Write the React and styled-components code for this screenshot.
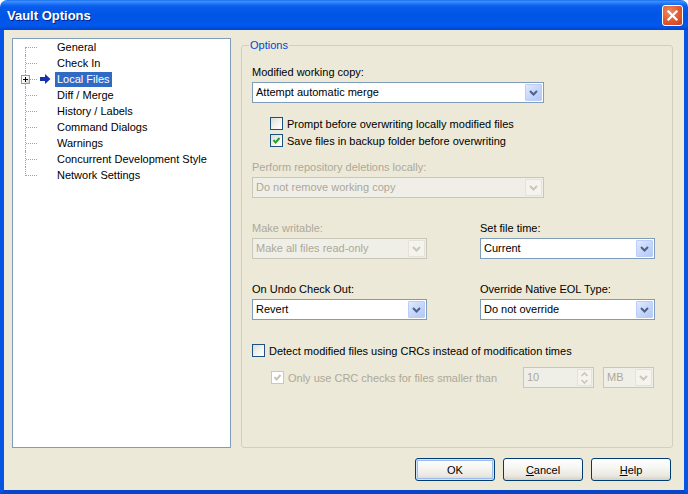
import React from 'react';
import styled, { createGlobalStyle, css } from 'styled-components';

const GlobalStyle = createGlobalStyle`
  body {
    margin: 0;
    background: #ffffff;
    font-family: 'Liberation Sans', Arial, sans-serif;
    font-size: 11px;
    color: #000;
  }
`;

const treeItems = [
  'General',
  'Check In',
  'Local Files',
  'Diff / Merge',
  'History / Labels',
  'Command Dialogs',
  'Warnings',
  'Concurrent Development Style',
  'Network Settings',
];

function Chevron({ disabled }) {
  return (
    <svg width="9" height="6" viewBox="0 0 9 6">
      <polyline points="1,1 4.5,4.5 8,1" fill="none" stroke={disabled ? '#C9C7BA' : '#4D6185'} strokeWidth="2" />
    </svg>
  );
}

function Combo({ value, disabled, width }) {
  return (
    <ComboBox $disabled={disabled} $width={width}>
      <ComboText>{value}</ComboText>
      <DropButton $disabled={disabled}>
        <Chevron disabled={disabled} />
      </DropButton>
    </ComboBox>
  );
}

function Check({ checked, disabled, children }) {
  return (
    <CheckLabel $disabled={disabled}>
      <CheckBox $disabled={disabled}>
        {checked && (
          <svg width="11" height="11" viewBox="0 0 11 11">
            <polyline points="2.5,5 4.5,7.5 8.5,3" fill="none" stroke={disabled ? '#C6C3B4' : '#21A121'} strokeWidth="2" />
          </svg>
        )}
      </CheckBox>
      {children}
    </CheckLabel>
  );
}

export default function App() {
  return (
    <>
      <GlobalStyle />
      <Window>
        <TitleBar>
          <Title>Vault Options</Title>
          <CloseButton>
            <svg width="13" height="13" viewBox="0 0 13 13">
              <path d="M2.5 2.5 L10.5 10.5 M10.5 2.5 L2.5 10.5" stroke="#fff" strokeWidth="2.2" strokeLinecap="square" />
            </svg>
          </CloseButton>
        </TitleBar>
        <Frame>
          <Main>
            <Tree>
              {treeItems.map((item, i) => (
                <TreeRow key={item}>
                  <Gutter $first={i === 0} $last={i === treeItems.length - 1}>
                    {item === 'Local Files' && (
                      <>
                        <PlusBox>
                          <svg width="7" height="7" viewBox="0 0 7 7">
                            <path d="M1 3.5 H6 M3.5 1 V6" stroke="#000" strokeWidth="1" />
                          </svg>
                        </PlusBox>
                        <Arrow>
                          <svg width="11" height="10" viewBox="0 0 11 10">
                            <polygon points="0,3 5,3 5,0 10.5,5 5,10 5,7 0,7" fill="#1A2FB0" />
                          </svg>
                        </Arrow>
                      </>
                    )}
                  </Gutter>
                  <TreeLabel $selected={item === 'Local Files'}>{item}</TreeLabel>
                </TreeRow>
              ))}
            </Tree>
            <Group>
              <Legend>Options</Legend>
              <Field $top={13}>
                <Label>Modified working copy:</Label>
                <Combo value="Attempt automatic merge" width={292} />
              </Field>
              <CheckList>
                <CheckRow $indent={18}>
                  <Check>Prompt before overwriting locally modified files</Check>
                </CheckRow>
                <CheckRow $indent={18}>
                  <Check checked>Save files in backup folder before overwriting</Check>
                </CheckRow>
              </CheckList>
              <Field $top={11}>
                <Label $disabled>Perform repository deletions locally:</Label>
                <Combo value="Do not remove working copy" width={292} disabled />
              </Field>
              <Columns $top={23}>
                <Field>
                  <Label $disabled>Make writable:</Label>
                  <Combo value="Make all files read-only" disabled />
                </Field>
                <Field>
                  <Label>Set file time:</Label>
                  <Combo value="Current" />
                </Field>
              </Columns>
              <Columns $top={23}>
                <Field>
                  <Label>On Undo Check Out:</Label>
                  <Combo value="Revert" />
                </Field>
                <Field>
                  <Label>Override Native EOL Type:</Label>
                  <Combo value="Do not override" />
                </Field>
              </Columns>
              <CheckRow $top={22}>
                <Check>Detect modified files using CRCs instead of modification times</Check>
              </CheckRow>
              <CrcRow>
                <Check checked disabled>Only use CRC checks for files smaller than</Check>
                <Spinner>
                  <ComboText>10</ComboText>
                  <SpinButtons>
                    <svg width="9" height="14" viewBox="0 0 9 14">
                      <polyline points="1.5,5 4.5,2 7.5,5" fill="none" stroke="#C9C7BA" strokeWidth="1.6" />
                      <polyline points="1.5,9 4.5,12 7.5,9" fill="none" stroke="#C9C7BA" strokeWidth="1.6" />
                    </svg>
                  </SpinButtons>
                </Spinner>
                <Combo value="MB" width={51} disabled />
              </CrcRow>
            </Group>
          </Main>
          <ButtonRow>
            <Button $default>OK</Button>
            <Button><u>C</u>ancel</Button>
            <Button><u>H</u>elp</Button>
          </ButtonRow>
        </Frame>
      </Window>
    </>
  );
}

const Window = styled.div`
  width: 688px;
  height: 494px;
  display: flex;
  flex-direction: column;
`;

const TitleBar = styled.div`
  height: 30px;
  flex: none;
  display: flex;
  align-items: center;
  justify-content: space-between;
  padding: 0 5px 0 7px;
  border-radius: 7px 7px 0 0;
  background: linear-gradient(to bottom, #0A5FE8 0px, #3D95FF 1px, #2A7EF8 3px, #0A5DEE 6px, #0055E5 50%, #0058EC 85%, #0046CC 100%);
`;

const Title = styled.div`
  color: #fff;
  font-weight: bold;
  font-size: 13px;
  text-shadow: 1px 1px 0 #0A1E8C;
`;

const CloseButton = styled.div`
  width: 21px;
  height: 21px;
  box-sizing: border-box;
  border: 1px solid #fff;
  border-radius: 3px;
  display: flex;
  align-items: center;
  justify-content: center;
  background: radial-gradient(circle at 35% 30%, #F08A62 0%, #E0592E 55%, #C4401E 100%);
`;

const Frame = styled.div`
  flex: 1;
  display: flex;
  flex-direction: column;
  background: #ECE9D8;
  border: 4px solid #0755E4;
  border-top: none;
  border-bottom-color: #0746C8;
  padding: 8px 11px 9px 8px;
`;

const Main = styled.div`
  height: 410px;
  flex: none;
  display: flex;
  gap: 10px;
`;

const Tree = styled.div`
  width: 219px;
  box-sizing: border-box;
  background: #fff;
  border: 1px solid #7F9DB9;
`;

const TreeRow = styled.div`
  display: flex;
  align-items: center;
  height: 16px;
`;

const Gutter = styled.div`
  position: relative;
  width: 42px;
  height: 100%;
  flex: none;
  &::before {
    content: '';
    position: absolute;
    left: 12px;
    top: ${p => (p.$first ? '8px' : '0')};
    bottom: ${p => (p.$last ? '7px' : '0')};
    border-left: 1px dotted #A0A0A0;
  }
  &::after {
    content: '';
    position: absolute;
    left: 13px;
    width: 11px;
    top: 8px;
    border-top: 1px dotted #A0A0A0;
  }
`;

const PlusBox = styled.div`
  position: absolute;
  left: 8px;
  top: 4px;
  width: 9px;
  height: 9px;
  box-sizing: border-box;
  border: 1px solid #919B9C;
  background: linear-gradient(135deg, #fff 40%, #D4D0C6);
  z-index: 1;
  display: flex;
  align-items: center;
  justify-content: center;
`;

const Arrow = styled.div`
  position: absolute;
  left: 27px;
  top: 3px;
  display: flex;
`;

const TreeLabel = styled.span`
  padding: 0 2px;
  line-height: 15px;
  white-space: nowrap;
  ${p => p.$selected && css`
    background: #316AC5;
    color: #fff;
  `}
`;

const Group = styled.fieldset`
  flex: 1;
  min-width: 0;
  margin: 0;
  padding: 0 11px 0 10px;
  border: 1px solid #D0D0BF;
  border-radius: 3px;
  display: flex;
  flex-direction: column;
`;

const Legend = styled.legend`
  color: #0046D5;
  line-height: 14px;
  padding: 0 1px;
  margin-left: -3px;
`;

const Field = styled.div`
  display: flex;
  flex-direction: column;
  gap: 3px;
  margin-top: ${p => p.$top || 0}px;
`;

const Label = styled.div`
  line-height: 14px;
  color: ${p => (p.$disabled ? '#ACA899' : '#000')};
`;

const ComboBox = styled.div`
  width: ${p => p.$width || 175}px;
  height: 21px;
  box-sizing: border-box;
  display: flex;
  align-items: stretch;
  background: ${p => (p.$disabled ? '#F0EFE7' : '#fff')};
  border: 1px solid ${p => (p.$disabled ? '#C9C7BA' : '#7F9DB9')};
  color: ${p => (p.$disabled ? '#ACA899' : '#000')};
`;

const ComboText = styled.div`
  flex: 1;
  padding-left: 3px;
  line-height: 19px;
  white-space: nowrap;
  overflow: hidden;
`;

const DropButton = styled.div`
  width: 17px;
  margin: 1px;
  border-radius: 1px;
  display: flex;
  align-items: center;
  justify-content: center;
  box-sizing: border-box;
  ${p => p.$disabled
    ? css`
      background: #F4F3EE;
      border: 1px solid #E5E3D7;
    `
    : css`
      background: linear-gradient(135deg, #E0EAFE 0%, #C6D7FB 50%, #B4C8F6 100%);
      border: 1px solid #BBCDF8;
    `}
`;

const CheckList = styled.div`
  margin-top: 12px;
  display: flex;
  flex-direction: column;
`;

const CheckRow = styled.div`
  height: 17px;
  display: flex;
  align-items: center;
  padding-left: ${p => p.$indent || 0}px;
  margin-top: ${p => p.$top || 0}px;
`;

const CheckLabel = styled.div`
  display: flex;
  align-items: center;
  gap: 4px;
  white-space: nowrap;
  color: ${p => (p.$disabled ? '#ACA899' : '#000')};
`;

const CheckBox = styled.div`
  width: 13px;
  height: 13px;
  box-sizing: border-box;
  flex: none;
  display: flex;
  align-items: center;
  justify-content: center;
  border: 1px solid ${p => (p.$disabled ? '#CAC8BB' : '#1C5180')};
  background: ${p => (p.$disabled ? '#fff' : 'linear-gradient(135deg, #DCDCD7 0%, #F5F4F0 60%, #fff 100%)')};
`;

const Columns = styled.div`
  display: grid;
  grid-template-columns: 175px 175px;
  column-gap: 53px;
  margin-top: ${p => p.$top}px;
`;

const CrcRow = styled.div`
  margin-top: 8px;
  height: 21px;
  display: grid;
  grid-template-columns: 243px 71px 51px;
  column-gap: 9px;
  align-items: center;
  padding-left: 19px;
`;

const Spinner = styled.div`
  height: 21px;
  box-sizing: border-box;
  display: flex;
  border: 1px solid #C9C7BA;
  background: #F0EFE7;
  color: #ACA899;
`;

const SpinButtons = styled.div`
  width: 15px;
  margin: 1px;
  display: flex;
  align-items: center;
  justify-content: center;
  background: #F4F3EE;
  border: 1px solid #E5E3D7;
  box-sizing: border-box;
`;

const ButtonRow = styled.div`
  margin-top: 10px;
  display: flex;
  justify-content: flex-end;
  gap: 8px;
  padding-right: 2px;
`;

const Button = styled.div`
  width: 80px;
  height: 23px;
  box-sizing: border-box;
  border: 1px solid #003C74;
  border-radius: 3px;
  display: flex;
  align-items: center;
  justify-content: center;
  background: linear-gradient(to bottom, #FFFFFF 0%, #F6F6F3 40%, #EAE8E0 80%, #D6D0C5 100%);
  ${p => p.$default && css`
    box-shadow: inset 0 0 0 1px #CEE7FF, inset 0 0 0 2px #9DBBF0;
  `}
  u {
    text-decoration: underline;
  }
`;
